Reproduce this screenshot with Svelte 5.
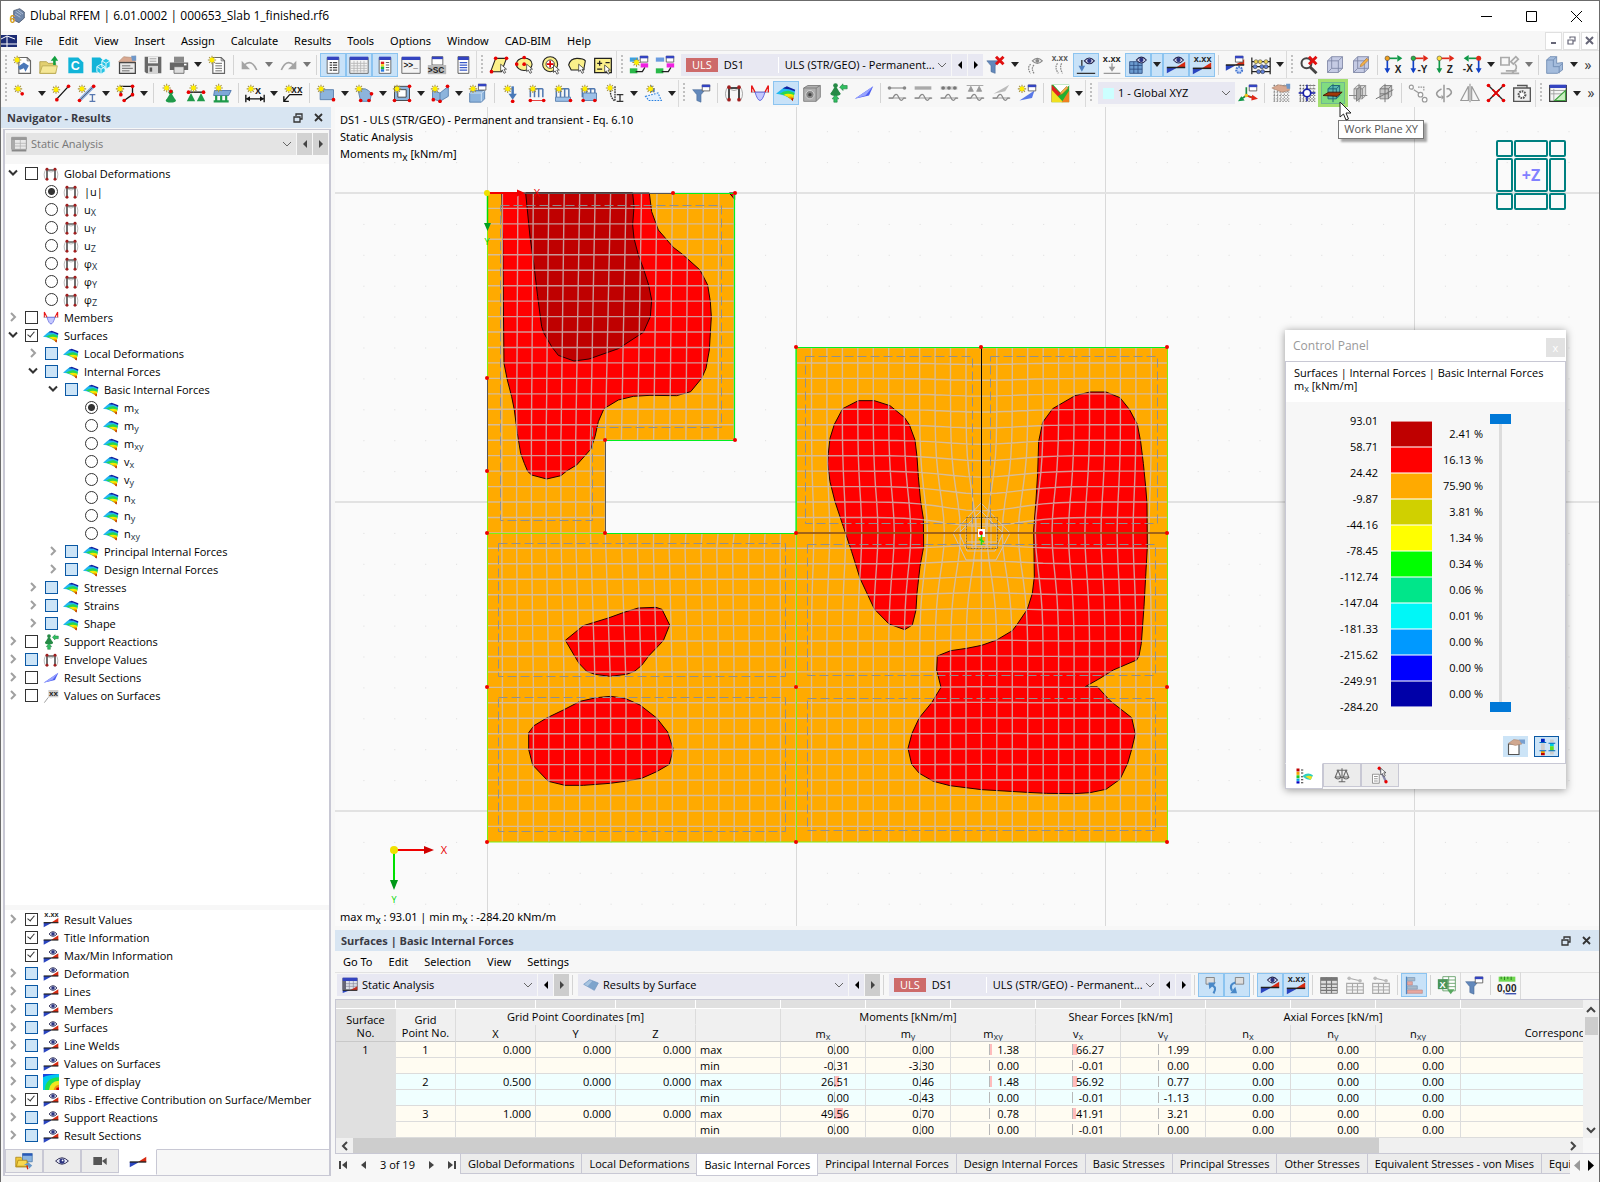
<script>
  // ---------- icon building blocks ----------
  const at = (x, y, s) => `<g transform="translate(${x} ${y})">${s}</g>`;
  const star = (x, y) => at(x, y, `<path d="M-5 0H5M0-5V5M-3.5-3.5l7 7M3.5-3.5l-7 7" stroke="#a89440" stroke-width="1.3"/><circle r="2.9" fill="#ffee00"/>`);
  const dot = (x, y, c = '#e80000') => `<circle cx="${x}" cy="${y}" r="2.2" fill="${c}"/>`;
  const win = (x, y) => at(x, y, `<path d="M.5.5h9v7h-9z" fill="#fff" stroke="#555"/><path d="M0 0h10v3H0z" fill="#3444c0"/>`);
  const eye = (x, y) => at(x, y, `<path d="M-6 0Q0-7 6 0Q0 7-6 0z" fill="#dfe2f4" stroke="#26264f" stroke-width="1.3"/><circle r="2.6" fill="#2c3480"/>`);
  const eyeGray = (x, y) => at(x, y, `<path d="M-6 0Q0-6 6 0Q0 6-6 0z" fill="#eee" stroke="#888" stroke-width="1.3"/><circle r="2.3" fill="#888"/>`);
  const cursor = (x, y) => at(x, y, `<path d="M0 0v9l2-2 2 4 2-1-2-4h3z" fill="#fff" stroke="#333" stroke-width=".9"/>`);
  const wedge = (y) => `<path d="M1 ${y}h11v1L1 ${y + 7}z" fill="#2a45c0"/><path d="M12 ${y}l11-7v7z" fill="#d82a10"/><path d="M1 ${y}h22" stroke="#222" stroke-width="1.8"/>`;
  const txt = (x, y, s, size = 8, c = '#222') => `<text x="${x}" y="${y}" font-size="${size}" font-weight="700" fill="${c}" font-family="Liberation Sans, sans-serif">${s}</text>`;
  const cone = (x, y, c = '#1f9a4a') => at(x, y, `<path d="M0-6L6 4H-6z" fill="${c}"/><ellipse cy="4" rx="6" ry="2.500" fill="${c}"/><circle cy="-6" r="2.800" fill="${c}"/>`);
  const funnel = (x, y) => at(x, y, `<path d="M0 0h15L10 6v9l-5-2V6z" fill="#6288bb" stroke="#4a6a98" stroke-width=".7"/>`);
  const doc = `<path d="M7 3h10l4 4v15H7z" fill="#fff" stroke="#666" stroke-width="1.4"/><path d="M17 3v4h4" fill="none" stroke="#666"/>`;
  const cube = `<path d="M3 7l5-5h13v14l-5 5H3z" fill="#c5cbe4" stroke="#7c84a4"/><path d="M3 7h13v14M16 7l5-5M8 2v14L3 21M8 16h13" fill="none" stroke="#7c84a4"/>`;
  const grid = (c) => `<path d="M3 3h19M3 7h19M3 11h19M3 15h19M3 19h19M3 22h19M4 2v20M8 2v20M12 2v20M16 2v20M20 2v20" stroke="${c}" stroke-dasharray="2 1.500"/>`;
  const wave = (c = '#888') => `<path d="M2 18h5q4-8 7-1t6 1h3" fill="none" stroke="${c}" stroke-width="1.500"/><path d="M2 18h20" stroke="${c}"/>`;
  const axis = (c1, c2, c3, t, flip) => flip
    ? `<path d="M20 5v15" stroke="${c2}" stroke-width="2"/><path d="M16.500 16h7L20 22z" fill="${c2}"/><path d="M20 4H8" stroke="${c1}" stroke-width="2"/><path d="M8 0v8L2 4z" fill="${c1}"/><circle cx="20" cy="4" r="3" fill="${c3}"/>` + txt(1, 20, t, 12)
    : `<path d="M4 5v15" stroke="${c2}" stroke-width="2"/><path d="M.500 16h7L4 22z" fill="${c2}"/><path d="M4 4h12" stroke="${c1}" stroke-width="2"/><path d="M16 0v8l6-4z" fill="${c1}"/><circle cx="4" cy="4" r="2.800" fill="${c3}" stroke="#333" stroke-width=".6"/>` + txt(t.length > 1 ? 9 : 13, 21, t, 12);
  const surface = `<path d="M0 13L6 8L10 5L23 9L20 21Q11 14 0 13z" fill="#20b8f0"/><path d="M8 6.500L13 4L23 8L22.500 10Q16 6.500 8 6.500z" fill="#1020a0"/><path d="M4 13.300Q10 9 16 9.500L22.300 12L20 21Q12 14 4 13.300z" fill="#28d850"/><path d="M9 14.500Q14 11.500 21.500 14.500L20 21Q15 16 9 14.500z" fill="#f8e800"/><path d="M14 17Q18 15 21 17.500L20 21z" fill="#f0a000"/><path d="M18 19l3-1-1 4z" fill="#c01000"/>`;
  const frame = `<path d="M6 20V6h12v14" fill="none" stroke="#111" stroke-width="1.800"/><path d="M5 4Q-1 12 4 21M19 4Q25 12 20 21M6 6Q12 12 18 6" fill="none" stroke="#999"/>${dot(6, 5, '#a02020')}${dot(18, 5, '#a02020')}${dot(6, 20, '#a02020')}${dot(18, 20, '#a02020')}`;
  const moment = `<path d="M1 11h22" stroke="#889"/><path d="M2 3v8M22 3v8M2 3l4 8M22 3l-4 8" fill="none" stroke="#e81818" stroke-width="1.600"/><path d="M6 11h12q-3 10-6 10t-6-10z" fill="#c4c8ff" stroke="#5058d8"/>`;
  const reactions = `<g>${cone(9, 9, '#268a46')}<path d="M14 5l4-4v2h5v4h-5v2zM7 23v-4H5l4-5 4 5h-2v4z" fill="#30c060" stroke="#1c7a3c" stroke-width=".7"/></g>`;
  const section = `<path d="M1 19L23 4l-5 11z" fill="#4c5cf0"/><path d="M1 19L23 4L14 15z" fill="#98a4ff"/>`;
  const blueRect = `<path d="M5 8h16v12H5z" fill="#8db4dc" stroke="#5078a8"/>`;
  const colorPanel = `<path d="M5 3h14v19H5z" fill="#fff" stroke="#555"/><path d="M5 2h14v4H5z" fill="#3444c0"/>`;
  const loadBars = `<path d="M4 7v10M9 7v10M14 7v10M19 7v10M4 7h15" stroke="#5078b0" stroke-width="1.800"/>`;
  const pencil = (x, y) => at(x, y, `<path d="M0 9l1-3 7-7 2 2-7 7z" fill="#f4b048" stroke="#a06820" stroke-width=".6"/>`);

  const icons = {
    newModel: doc + `<path d="M6 14l7-5 6 4-4 7-2-4-5 2z" fill="#4a78b8"/>` + star(5, 6),
    open: `<path d="M1 8h8l2 2h9v12H1z" fill="#e2cf70" stroke="#b09c48"/><path d="M1 22l3-9h18l-2 9z" fill="#f5e796" stroke="#b8a850"/><path d="M17 12V7h-3l5-6 4 6h-3v5z" fill="#12a040"/>`,
    cloud: `<path d="M4 3h12l6 6v13H4z" fill="#12b4d8"/>` + txt(7, 18, 'C', 15, '#fff'),
    cloudModel: `<path d="M1 3h10l3 3v7l-3 8H1z" fill="#12b4d8"/><path d="M13 7l5-3 5 3v7l-5 3-5-3zM7 14l5-3 5 3v6l-5 3-5-3z" fill="#28c4e4" stroke="#fff"/><path d="M13 7l5 3 5-3M18 10v7M7 14l5 3 5-3M12 17v6" stroke="#fff"/>`,
    manager: `<path d="M3 9h19v13H3z" fill="#e8e8e8" stroke="#444" stroke-width="1.500"/><path d="M6 13h10M6 16h13M6 19h9" stroke="#555"/><path d="M2 8l6-6 10 1 4-2v7H10z" fill="#d8a890" stroke="#a07860" stroke-width=".6"/><path d="M17 1h6v6h-5z" fill="#7098c8"/>`,
    save: `<path d="M2 2h20v20H4l-2-2z" fill="#686868"/><path d="M6 2h12v8H6z" fill="#eee"/><path d="M8 4.500h8M8 7.500h8" stroke="#999"/><path d="M6 13h12v9H6z" fill="#d4d4d4"/><path d="M8 15h3v5H8z" fill="#555"/>`,
    print: `<path d="M6 2h12v7H6z" fill="#8a8a8a"/><path d="M1 9h22v9H1z" fill="#666"/><path d="M6 14h12v8H6z" fill="#ddd" stroke="#666"/><path d="M18 11.500h3" stroke="#fff" stroke-width="2"/>`,
    report: doc + `<path d="M10 10h8M10 13h8M10 16h8M10 19h8" stroke="#555"/>` + star(6, 6),
    undo: `<path d="M5 12q9-8 15 6" fill="none" stroke="#a4a4a4" stroke-width="2"/><path d="M2 7v10h10z" fill="#a4a4a4"/>`,
    redo: `<path d="M19 12q-9-8-15 6" fill="none" stroke="#a4a4a4" stroke-width="2"/><path d="M22 7v10H12z" fill="#a4a4a4"/>`,
    winNav: colorPanel + `<path d="M8 9h3M8 12h3M8 15h3M8 18h3M12 9h5M12 12h5M12 15h5M12 18h5" stroke="#444" stroke-width="1.500"/>`,
    winTable: `<path d="M1 3h22v19H1z" fill="#f4f4f4" stroke="#555"/><path d="M1 2h22v4H1z" fill="#3444c0"/><path d="M2 10h20M2 13h20M2 16h20M2 19h20M6 7v14M10 7v14M14 7v14M18 7v14" stroke="#b4b4b4"/>`,
    winPanel: colorPanel + `<path d="M7 8h4v3H7z" fill="#e02020"/><path d="M7 11h4v3H7z" fill="#f0d820"/><path d="M7 14h4v3H7z" fill="#20b840"/><path d="M7 17h4v3H7z" fill="#2878e0"/><path d="M13 9h4M13 12h4M13 15h4M13 18h4" stroke="#444"/>`,
    console: `<path d="M1 3h22v19H1z" fill="#f4f4f4" stroke="#555"/><path d="M1 2h22v4H1z" fill="#3444c0"/>` + txt(3, 15, '&gt;&gt;_', 10),
    script: `<path d="M6 2h13v10H6z" fill="#fff" stroke="#555"/><path d="M6 2h13v3H6z" fill="#3444c0"/><path d="M1 12h22v11H1z" fill="#b8b8b8"/>` + txt(1, 21, '&gt;SC', 10),
    winList: `<path d="M6 2h13v20H6z" fill="#fff" stroke="#444"/><path d="M6 2h13v4H6z" fill="#3444c0"/><path d="M8 9h9M8 12h9M8 15h9M8 18h9" stroke="#3858c8" stroke-width="1.500"/>`,
    selPoly: `<path d="M8 4h13l-6 16H2z" fill="#fbf08a" stroke="#222" stroke-width="1.300"/>${dot(8, 4)}${dot(21, 4)}${dot(3, 20)}` + cursor(14, 11),
    selEllipse: `<ellipse cx="11" cy="11" rx="9.500" ry="7.500" fill="#fbf08a" stroke="#222" stroke-width="1.300"/>${dot(11, 3)}${dot(2, 11)}${dot(11, 11)}` + cursor(14, 11),
    selRing: `<circle cx="11" cy="11" r="9" fill="#fbf08a" stroke="#222" stroke-width="1.300"/><circle cx="11" cy="11" r="5" fill="#fff" stroke="#222"/><path d="M11 7v8M7 11h8" stroke="#e00000" stroke-width="2"/>` + cursor(15, 12),
    selFree: `<path d="M2 12q2-8 10-8t10 3l-2 11H5z" fill="#fbf08a" stroke="#222" stroke-width="1.300"/>` + cursor(14, 11),
    selPlus: `<path d="M2 4h20v17H2z" fill="#fbf08a" stroke="#222" stroke-width="1.500"/><path d="M5 10h6M8 7v6M5 17h6M15 9h5" stroke="#222" stroke-width="1.500"/>` + cursor(14, 12),
    loadNew: `<path d="M1 3h10v5H1z" fill="#3aa0e0"/><path d="M1 16h9v6H1z" fill="#28b848"/><path d="M14 10h9v5h-9z" fill="#f020e0"/><path d="M8 20h8l3-5" fill="none" stroke="#222" stroke-width="1.600"/>` + star(9, 9) + win(13, 1),
    loadEdit: `<path d="M1 3h10v5H1z" fill="#6a9ce0"/><path d="M1 16h9v6H1z" fill="#28b848"/><path d="M14 10h9v5h-9z" fill="#f020e0"/><path d="M8 20h8l3-5" fill="none" stroke="#222" stroke-width="1.600"/>` + win(13, 1),
    filterOff: funnel(1, 7) + `<path d="M12 2l9 9M21 2l-9 9" stroke="#e01010" stroke-width="3.500"/>`,
    beamEye: `<path d="M8 11q-5 4 0 11M12 12q-4 4 0 10" fill="none" stroke="#888" stroke-width="1.500" stroke-dasharray="2 1"/>` + eyeGray(16, 7),
    beamVals: txt(2, 7, 'x.xx', 10, '#555') + `<path d="M9 10q-4 5 1 12M14 10q-3 5 1 12" fill="none" stroke="#888" stroke-width="1.500" stroke-dasharray="2 1"/>`,
    arrowEye: `<path d="M7 6v10M1 22h22" stroke="#333" stroke-width="1.600"/><path d="M3 13h8l-4 7z" fill="#5080c0"/>` + eye(16, 7),
    arrowVals: txt(1, 8, 'x.xx', 11) + `<path d="M12 10v6M2 22h20" stroke="#999" stroke-width="1.600"/><path d="M8 14h8l-4 6z" fill="#999"/>`,
    gridEye: `<path d="M2 8h15v14H2z" fill="#6c9cd0"/><path d="M2 12.500h15M2 17h15M7 8v14M12 8v14M2 8h15v14H2z" fill="none" stroke="#2c4c80"/>` + eye(16, 6),
    diagEye: wedge(15) + eye(15, 6),
    diagVals: wedge(16) + txt(2, 8, 'x.xx', 11),
    winGear: wedge(12) + win(12, 1) + `<circle cx="17" cy="18" r="3.500" fill="#c8dcff" stroke="#4878d0" stroke-width="2.500" stroke-dasharray="2 1"/>`,
    abacus: `<path d="M1 3v20M23 3v20M1 8h22M1 14h22M1 20h22" stroke="#222" stroke-width="1.500"/><g fill="#e8d050" stroke="#555" stroke-width=".7"><circle cx="6" cy="8" r="2.400"/><circle cx="11" cy="8" r="2.400"/><circle cx="18" cy="8" r="2.400"/></g><g fill="#6080d8" stroke="#333" stroke-width=".7"><circle cx="5" cy="14" r="2.400"/><circle cx="13" cy="14" r="2.400"/><circle cx="18" cy="14" r="2.400"/><circle cx="9" cy="20" r="2.400"/><circle cx="14" cy="20" r="2.400"/></g>`,
    zoomOff: `<circle cx="9" cy="10" r="6" fill="none" stroke="#444" stroke-width="2.400"/><path d="M13 14l8 8" stroke="#444" stroke-width="3.500"/><path d="M12 2l9 9M21 2l-9 9" stroke="#e01010" stroke-width="3.400"/>`,
    cube,
    cubeEdit: cube + pencil(11, 5),
    axisX: axis('#109848', '#1040c8', '#f0a020', 'X'),
    axisY: axis('#e02818', '#1040c8', '#28b048', '-Y'),
    axisZ: axis('#e02818', '#109848', '#ffe040', 'Z'),
    axisXn: axis('#109848', '#1040c8', '#e02818', '-X', true),
    microscope: `<path d="M1 3h10v9H1zM1 22h22M7 19h13M13 8l6-6 3 3-6 6zM18 11q5 5-4 11" fill="none" stroke="#aaa" stroke-width="2"/>`,
    solidL: `<path d="M2 6l4-4h8v8l7-1v9l-6 4H2z" fill="#a4bcdc" stroke="#6c88b0"/><path d="M2 6h8v8h7v8M10 6l4-4M17 14l4-4" fill="none" stroke="#6c88b0"/>`,
    node: star(6, 7) + dot(11, 13),
    line: `<path d="M7 19L21 4" stroke="#111" stroke-width="1.600"/>${dot(7, 20)}${dot(21, 4)}` + star(6, 8),
    member: `<path d="M4 20L19 5" stroke="#88a8d8" stroke-width="4"/><path d="M4 20L19 5" stroke="#333" stroke-width=".7"/>${dot(20, 4)}${dot(3, 21)}<path d="M15 14h7M15 22h7M18.500 14v8" stroke="#5878b0" stroke-width="1.600"/>` + star(6, 7),
    polyline: `<path d="M7 14V4h14v10L11 21" fill="none" stroke="#111" stroke-width="1.600"/>${dot(7, 14)}${dot(21, 4)}${dot(21, 14)}${dot(11, 21)}` + star(6, 7),
    support: cone(13, 17) + dot(13, 10) + star(8, 6),
    support2: `<path d="M4 11h16" stroke="#111" stroke-width="1.600"/>${dot(3, 11)}${dot(21, 11)}` + `<path d="M6 12l5 10H1zM18 12l5 10H13z" fill="#1f9a4a"/>` + star(9, 6),
    supportS: `<path d="M3 9h20l-3 6H2z" fill="#7ea8d8" stroke="#4870a8"/><path d="M5 15v7M11 15v7M17 15v7M2 22h18" stroke="#1f9a4a" stroke-width="2.600"/>` + star(8, 6),
    dimX: `<path d="M1 14v9M23 14v9M2 19h20" stroke="#111" stroke-width="1.600"/><path d="M1 19l5-3v6zM23 19l-5-3v6z" fill="#111"/>` + txt(12, 13, 'x', 13) + star(7, 7),
    dimXX: `<path d="M8 14h15M8 14l-7 8M1 16v6h6" stroke="#111" stroke-width="1.600"/>` + txt(10, 12, 'xx', 12) + star(7, 7),
    surf: blueRect + dot(21, 20) + star(6, 7),
    surfRound: `<path d="M5 9q9-6 16 4l-2 9H8z" fill="#8db4dc" stroke="#5078a8"/>${dot(21, 13)}${dot(8, 21)}${dot(18, 21)}` + star(6, 7),
    opening: `<path d="M3 4h18v17H3z" fill="#8db4dc" stroke="#333"/><path d="M7 8h10v9H7z" fill="#fff" stroke="#333"/>${dot(21, 4)}${dot(3, 21)}${dot(21, 21)}` + star(6, 7),
    solid: `<path d="M3 9l9 3 10-8v12l-10 6-9-3z" fill="#8db4dc" stroke="#5078a8"/><path d="M12 12v10" stroke="#5078a8"/>${dot(21, 4)}${dot(4, 20)}${dot(12, 22)}` + star(6, 7),
    solidWin: `<path d="M2 12l4-3h14v10l-4 4H2z" fill="#8db4dc" stroke="#5078a8"/><path d="M2 12h14v10M16 12l4-3" fill="none" stroke="#d8e8f8"/>` + win(12, 1) + star(6, 7),
    loadNode: `<path d="M14 4v11" stroke="#4878b8" stroke-width="3"/><path d="M9 13h10l-5 7z" fill="#4878b8"/>${dot(14, 22)}` + star(8, 7),
    loadLine: loadBars + `<path d="M3 21h18" stroke="#e02020"/>${dot(4, 21)}${dot(20, 21)}` + star(7, 7),
    loadRect: loadBars + `<path d="M3 17h18v5H3z" fill="#9cc0e8" stroke="#5078a8"/>${dot(21, 21)}` + star(7, 7),
    loadSolid: loadBars + `<path d="M5 12h16v9H5z" fill="#9cc0e8" stroke="#5078a8"/>${dot(5, 21)}${dot(19, 21)}` + star(7, 7),
    loadFree: `<path d="M8 6q-4 9 4 16M12 4v17" fill="none" stroke="#333" stroke-width="1.600" stroke-dasharray="2 1"/><path d="M14 14h8M14 22h8M18 14v8" stroke="#333" stroke-width="1.600"/>` + star(6, 6),
    imperf: `<path d="M3 16l15-4 4 9H7z" fill="#e4f0ff" stroke="#2880e0" stroke-width="1.300" stroke-dasharray="2 1.500"/><path d="M10 3v8M13 6v5" stroke="#4878b8" stroke-width="2"/>` + star(9, 7),
    filterWin: funnel(2, 8) + win(13, 2),
    frame, moment, surface, reactions, section,
    solidRes: `<path d="M2 6l5-3h15v14l-5 5H2z" fill="#b0b0b0" stroke="#777"/><path d="M2 6h15v16M17 6l5-3" fill="none" stroke="#777"/><circle cx="9.500" cy="14" r="5" fill="#888" stroke="#ddd"/><circle cx="9.500" cy="14" r="2" fill="#444"/>`,
    wave1: `<path d="M3 6h18" stroke="#888" stroke-width="1.300"/>${dot(3, 6, '#888')}${dot(21, 6, '#888')}` + wave(),
    wave2: `<path d="M2 4h20v4H2z" fill="#aaa"/>` + wave(),
    wave3: `<path d="M2 4h20v4H2z" fill="#ccc"/>${dot(5, 6, '#777')}${dot(12, 6, '#777')}${dot(19, 6, '#777')}` + wave(),
    wave4: `<path d="M2 3h20M7 4l3 6H4zM17 4l3 6h-6z" fill="#999" stroke="#999"/>` + wave(),
    wave5: `<path d="M3 13L22 2l-5 8z" fill="#bbb"/>` + wave(),
    sectionWin: `<path d="M3 21l18-12-3 9z" fill="#5878e8"/>` + win(13, 2) + star(6, 7),
    palette: `<path d="M2 2h21v21H2z" fill="#20b030"/><path d="M2 2l11 11-11 10z" fill="#e02020"/><path d="M2 23V8l14 15z" fill="#f0e020"/><path d="M23 23V9l-9 14z" fill="#f08020"/><path d="M4 2l9 10L23 3V2z" fill="#fff"/>` + pencil(12, 5),
    axes: `<path d="M10 14V5M10 15l10 3M10 15l-7 5" stroke="#1c8a40" stroke-width="2"/><path d="M17 14l7 5-8 2z" fill="#e02818"/><path d="M0 22l4-6 4 5z" fill="#109848"/><path d="M10 15l8 3" stroke="#e02818" stroke-width="2"/>${dot(10, 15, '#f0c020')}` + win(13, 2),
    gridHand: grid('#777') + `<path d="M1 6l8-4 8 2 5-2v7l-9 2z" fill="#d8a890" stroke="#a07860" stroke-width=".6"/><path d="M18 1h5v6h-4z" fill="#7098c8"/>`,
    gridSnap: grid('#555') + `<path d="M12 2v20M2 12h20" stroke="#1820a8" stroke-width="1.800"/><circle cx="12" cy="12" r="4.500" fill="#fff" stroke="#1820a8" stroke-width="2"/>`,
    planeXY: `<path d="M6 7l4-4h10v12l-4 4H6z" fill="#58b8b0" stroke="#206878" stroke-width="1.200"/><path d="M12 1v22M6 7h10v12M16 7l4-4" stroke="#206878" stroke-width="1.200"/><path d="M0 15l7-4h16l-6 5z" fill="#a03808" stroke="#401000"/>`,
    planeYZ: `<path d="M6 7l4-4h10v12l-4 4H6z" fill="#d8d8d8" stroke="#999" stroke-width="1.200"/><path d="M12 1v22M0 15h22M6 7h10v12M16 7l4-4" stroke="#888" stroke-width="1.200"/><path d="M9 8l5-4v13l-5 5z" fill="#aaa" stroke="#777"/>`,
    planeXZ: `<path d="M6 7l4-4h10v12l-4 4H6z" fill="#c8c8c8" stroke="#888" stroke-width="1.200"/><path d="M1 19L22 8M12 1v22M6 7h10v12M16 7l4-4M6 13h10" stroke="#777" stroke-width="1.200"/>`,
    copy: `<g fill="#fff" stroke="#999" stroke-width="1.400"><circle cx="4" cy="5" r="2.400"/><circle cx="15" cy="14" r="2.800"/><circle cx="20" cy="20" r="2.800"/><path d="M7 8l6 4" fill="none"/><path d="M12 5h7v5" fill="none" stroke-dasharray="2 1"/></g>`,
    rotate: `<path d="M12 2v21M9 7q-10 5-3 10h3M15 17q10-5 3-10h-3" fill="none" stroke="#999" stroke-width="1.800"/><path d="M9 14v6l3-3z" fill="#999"/>`,
    mirror: `<path d="M10 4v17H1zM14 4v17h9zM12 1v22" fill="none" stroke="#999" stroke-width="1.400"/>`,
    intersect: `<path d="M3 3l18 18M21 3L3 21" stroke="#222" stroke-width="1.600"/>${dot(3, 3)}${dot(21, 3)}${dot(3, 21)}${dot(21, 21)}<path d="M8 8l8 8M16 8l-8 8" stroke="#e80000" stroke-width="2.200"/>`,
    camera: `<path d="M2 6h20v16H2zM6 3h12v3" fill="#eee" stroke="#555" stroke-width="1.600"/><circle cx="12" cy="14" r="4" fill="#fff" stroke="#555" stroke-width="2.600" stroke-dasharray="2 1"/>`,
    tableTri: `<path d="M2 3h20v19H2z" fill="#f4f4f4" stroke="#333" stroke-width="1.400"/><path d="M2 2h20v4H2z" fill="#3444c0"/><path d="M3 9h18M3 13h18M7 7v14" stroke="#999"/><path d="M8 21h13V9z" fill="#c8f0c0" stroke="#40a040" stroke-width="1.300"/>`,
    goBack: `<path d="M6 3h10v8H6z" fill="#ddd" stroke="#777"/><path d="M12 12q8 2 3 10" fill="none" stroke="#4888c8" stroke-width="2.600"/><path d="M9 9h9l-8 8z" fill="#4888c8"/>`,
    goDown: `<path d="M10 3h10v8H10z" fill="#ddd" stroke="#777"/><path d="M10 9q-8 2-4 10" fill="none" stroke="#4888c8" stroke-width="2.600"/><path d="M4 22h8l-2-8z" fill="#4888c8"/>`,
    tblGray: `<path d="M2 3h20v19H2z" fill="#ddd" stroke="#777"/><path d="M2 3h20v4H2z" fill="#777"/><path d="M2 11h20M2 15h20M2 18.500h20M9 3v19M15 3v19" stroke="#777" stroke-width="1.400"/>`,
    tblLight: `<path d="M2 10h20v12H2z" fill="#f4f4f4" stroke="#aaa" stroke-width="1.300"/><path d="M2 14h20M2 18h20M9 10v12M15 10v12M5 4l13 3" stroke="#aaa" stroke-width="1.300"/>${dot(5, 4, '#bbb')}${dot(18, 7, '#bbb')}`,
    bars: `<path d="M3 2v21" stroke="#4888c8" stroke-width="1.500"/><path d="M4 3h9v4H4zM4 13h12v4H4z" fill="#a8b8c8" stroke="#7898b8" stroke-width=".8"/><path d="M4 8h6v4H4zM4 18h18v4H4z" fill="#e8a8a0" stroke="#b88" stroke-width=".8"/>`,
    excel: `<path d="M7 2h15v17H7zM7 6h15M7 10h15M7 14h15M14 2v17" fill="#fff" stroke="#5a9a60"/><path d="M1 5h12v12H1z" fill="#4a9458"/>` + txt(3, 15, 'X', 11, '#fff') + `<path d="M12 17h9l-4.500 6z" fill="#58a860"/>`,
    decimals: `<path d="M2 2h20v6H2z" fill="#70d850"/><path d="M5 2v3M9 2v4M13 2v3M17 2v4" stroke="#207020"/>` + txt(0, 20, '0,00', 12) + `<path d="M10 22.500h13" stroke="#2038a8" stroke-width="1.500"/>`,
    folderNav: `<path d="M1 7h7l2 2h7v11H1z" fill="#f0c838" stroke="#a88010"/><path d="M10 2h13v11H10z" fill="#8ab4e0" stroke="#4878a8"/><path d="M10 2h13v3H10z" fill="#2858b8"/><path d="M4 11h12v8H2z" fill="#f8d850" stroke="#a88010"/><path d="M12 17l6-3 5 4-4 4-2-4z" fill="#6898c8"/><path d="M16 18l1 5" stroke="#d82010" stroke-width="1.800"/>`,
    eyeOnly: `<path d="M1 12Q12 1 23 12Q12 23 1 12z" fill="#e8eaf8" stroke="#26264f" stroke-width="1.600"/><circle cx="12" cy="12" r="4.500" fill="#2c3480"/><circle cx="13" cy="11" r="1.500" fill="#fff"/>`,
    video: `<path d="M2 6h13v12H2z" fill="#555"/><path d="M15 12l7-5v11z" fill="#555"/>`,
    wedge: wedge(12),
    valuesTag: `<path d="M8 3h15v11H8z" fill="#d0d0d0"/><path d="M8 14l-6 8" stroke="#999" stroke-width="1.400"/>` + txt(9, 12, 'xx', 12),
    display: `<path d="M0 0h24v24H0z" fill="#1848e0"/><path d="M0 24V5Q8 1 24 0v24z" fill="#00c8f0"/><path d="M3 24Q3 6 24 5v19z" fill="#20e050"/><path d="M9 24Q10 11 24 10v14z" fill="#f0e820"/><path d="M16 24Q17 17 24 16v8z" fill="#f09018"/><path d="M20 24v-3l4-1v4z" fill="#d00000"/>`,
    app: `<path d="M7 4l9-3 7 5v9l-8 7-8-4z" fill="#6f86a8" stroke="#2f3e58"/><path d="M10 5l8 5M13 3l8 6M9 9l8 5" stroke="#c8d4e8"/>` + txt(1, 23, '6', 15, '#d09a10'),
    staticCase: `<path d="M1 2h22v17H1z" fill="#dfe2ea" stroke="#555"/><path d="M1 1h22v5H1z" fill="#3444c0"/><path d="M1 6h5v13H1z" fill="#667"/><path d="M6 10h17M6 14h17M11 6v13M17 6v13" stroke="#889"/><path d="M12 20l11-6v6z" fill="#c83020"/><path d="M1 20h11L1 24z" fill="#2a45c0"/><path d="M1 20h22" stroke="#222" stroke-width="1.500"/>`,
    staticGray: `<path d="M1 2h22v18H1z" fill="#e8e8e8" stroke="#999" stroke-width="1.500"/><path d="M1 2h22v4H1z" fill="#999"/><path d="M1 6h5v14H1z" fill="#aaa"/><path d="M6 11h17M6 15h17M14 6v14" stroke="#aaa"/><path d="M1 22h22" stroke="#888" stroke-width="2.400"/>`,
    surfTile: `<path d="M1 11l9-7 13 5-6 11z" fill="#7ea4cc" stroke="#6c94c0"/><path d="M2 11l8-6 4 1-7 8z" fill="#a8c4e0"/>`,
    legend: `<path d="M2 2h4v4H2z" fill="#c00000"/><path d="M2 6.500h4v4H2z" fill="#f0a000"/><path d="M2 11h4v4H2z" fill="#20c820"/><path d="M2 15.500h4v3H2z" fill="#00a8e8"/><path d="M2 19h4v3H2z" fill="#0000c0"/><path d="M8 4h3M8 8h3M8 13h3M8 17h3M8 21h3" stroke="#333" stroke-width="1.500"/><path d="M10 12q7-6 14-1l-3 6q-5 1-11-5z" fill="#30d0c0"/><path d="M14 13q4-3 9 0l-2 4z" fill="#f0e020"/>`,
    scales: `<path d="M12 2v20M7 22h10M4 5h16M6 5L2 15h8zM18 5l-4 10h8zM1 15q5 6 10 0M13 15q5 6 10 0" fill="none" stroke="#666" stroke-width="1.600"/>`,
    pick: `<path d="M2 11h9v12H2z" fill="#fff" stroke="#777"/><path d="M4 14h5M4 17h5M4 20h5" stroke="#777"/><path d="M12 4l8 17" stroke="#88a" stroke-width="3"/>${dot(11, 3)}${dot(20, 21)}` + cursor(13, 3),
    hand: `<path d="M2 8h14v14H2z" fill="#fff" stroke="#555" stroke-width="1.500"/><path d="M2 7l7-5 8 1 3 5-9 2z" fill="#d0a890" stroke="#a07860" stroke-width=".6"/><path d="M16 2h8v6l-5-1z" fill="#78a0d0"/>`,
    sliders: `<path d="M4 1h5v5H4z" fill="#0020c0"/><path d="M4 7h5v9H4zM16 2h5v4h-5zM16 18h5v4h-5z" fill="#ccc"/><path d="M4 17h5v3H4z" fill="#f0a000"/><path d="M4 20h5v3H4z" fill="#c00000"/><path d="M16 7h5v4h-5z" fill="#00d0e0"/><path d="M16 11h5v6h-5z" fill="#60e020"/><path d="M2 6h9M2 17h9M14 7h9M14 17h9" stroke="#0068c0" stroke-width="1.500"/>`
  };
  icons.resEye = icons.diagEye;
  icons.resVals = icons.diagVals;

  // ---------- toolbars: '|' separator, 'v' drop arrow, '!' pressed ----------
  const bar1 = [
    ['newModel', 'open', 'cloud', 'cloudModel', 'manager', 'save', 'print', 'v', 'report', '|', 'undo', 'v-', 'redo', 'v-', '|', '!winNav', '!winTable', '!winPanel', 'console', 'script', 'winList'],
    ['selPoly', 'selEllipse', 'selRing', 'selFree', 'selPlus'],
    ['loadNew', 'loadEdit', 'CASE', 'filterOff', 'v', 'beamEye', 'beamVals', '!arrowEye', 'arrowVals', '!gridEye', '!v', '!diagEye', '!diagVals', '|', 'winGear', 'abacus', 'v'],
    ['zoomOff', 'cube', 'cubeEdit', '|', 'axisX', 'axisY', 'axisZ', 'axisXn', 'v', 'microscope', 'v-', '|', 'solidL', 'v', 'MORE']
  ];
  const bar2 = [
    ['node', 'v', 'line', 'member', 'v', 'polyline', 'v', '|', 'support', 'support2', 'supportS', '|', 'dimX', 'v', 'dimXX', '|', 'surf', 'v', 'surfRound', 'v', 'opening', 'v', 'solid', 'v', 'solidWin', '|', 'loadNode', 'loadLine', 'loadRect', 'loadSolid', 'loadFree', 'v', 'imperf', 'v'],
    ['filterWin', '|', 'frame', 'moment', '!surface', 'solidRes', 'reactions', 'section', '|', 'wave1', 'wave2', 'wave3', 'wave4', 'wave5', 'sectionWin', '|', 'palette', 'v'],
    ['COORD', 'axes', '|', 'gridHand', 'gridSnap', '!planeXY', 'planeYZ', 'planeXZ', '|', 'copy', 'rotate', 'mirror', 'intersect', 'camera'],
    ['tableTri', 'v', 'MORE']
  ];
  const menus = ['File', 'Edit', 'View', 'Insert', 'Assign', 'Calculate', 'Results', 'Tools', 'Options', 'Window', 'CAD-BIM', 'Help'];
  const tableMenus = ['Go To', 'Edit', 'Selection', 'View', 'Settings'];

  // ---------- navigator: [level, expander, control, icon, text, subscript] ----------
  const tree = [
    [0, 'o', 'c', 'frame', 'Global Deformations'],
    [1, '', 'R', 'frame', '|u|'], [1, '', 'r', 'frame', 'u', 'X'], [1, '', 'r', 'frame', 'u', 'Y'], [1, '', 'r', 'frame', 'u', 'Z'],
    [1, '', 'r', 'frame', 'φ', 'X'], [1, '', 'r', 'frame', 'φ', 'Y'], [1, '', 'r', 'frame', 'φ', 'Z'],
    [0, 'c', 'c', 'moment', 'Members'],
    [0, 'o', 'C', 'surface', 'Surfaces'],
    [1, 'c', 'p', 'surface', 'Local Deformations'],
    [1, 'o', 'p', 'surface', 'Internal Forces'],
    [2, 'o', 'p', 'surface', 'Basic Internal Forces'],
    [3, '', 'R', 'surface', 'm', 'x'], [3, '', 'r', 'surface', 'm', 'y'], [3, '', 'r', 'surface', 'm', 'xy'],
    [3, '', 'r', 'surface', 'v', 'x'], [3, '', 'r', 'surface', 'v', 'y'],
    [3, '', 'r', 'surface', 'n', 'x'], [3, '', 'r', 'surface', 'n', 'y'], [3, '', 'r', 'surface', 'n', 'xy'],
    [2, 'c', 'p', 'surface', 'Principal Internal Forces'],
    [2, 'c', 'p', 'surface', 'Design Internal Forces'],
    [1, 'c', 'p', 'surface', 'Stresses'], [1, 'c', 'p', 'surface', 'Strains'], [1, 'c', 'p', 'surface', 'Shape'],
    [0, 'c', 'c', 'reactions', 'Support Reactions'],
    [0, 'c', 'p', 'frame', 'Envelope Values'],
    [0, 'c', 'c', 'section', 'Result Sections'],
    [0, 'c', 'c', 'valuesTag', 'Values on Surfaces']
  ];
  const options = [
    [0, 'c', 'C', 'resVals', 'Result Values'],
    [0, '', 'C', 'resEye', 'Title Information'],
    [0, '', 'C', 'resEye', 'Max/Min Information'],
    [0, 'c', 'p', 'resEye', 'Deformation'],
    [0, 'c', 'p', 'resEye', 'Lines'],
    [0, 'c', 'p', 'resEye', 'Members'],
    [0, 'c', 'p', 'resEye', 'Surfaces'],
    [0, 'c', 'p', 'resEye', 'Line Welds'],
    [0, 'c', 'p', 'resEye', 'Values on Surfaces'],
    [0, 'c', 'p', 'display', 'Type of display'],
    [0, 'c', 'C', 'resEye', 'Ribs - Effective Contribution on Surface/Member'],
    [0, 'c', 'p', 'resEye', 'Support Reactions'],
    [0, 'c', 'p', 'resEye', 'Result Sections']
  ];

  // ---------- control panel ----------
  const levels = ['93.01', '58.71', '24.42', '-9.87', '-44.16', '-78.45', '-112.74', '-147.04', '-181.33', '-215.62', '-249.91', '-284.20'];
  const bands = [
    ['#bf0000', '2.41 %'], ['#ff0000', '16.13 %'], ['#ffaa00', '75.90 %'], ['#d0d000', '3.81 %'], ['#ffff00', '1.34 %'], ['#00ff00', '0.34 %'],
    ['#00e68a', '0.06 %'], ['#00f7f7', '0.01 %'], ['#0099ff', '0.00 %'], ['#0000ff', '0.00 %'], ['#0000a8', '0.00 %']
  ];

  // ---------- result table ----------
  const widths = [60, 60, 80, 80, 80, 85, 85, 85, 85, 85, 85, 85, 85, 85, 260];
  const axisAt = [53, 54, 38, 36, 37];
  const rows = [
    ['1', '0.000', '0.000', '0.000', 'max', ['0.00', '0.00', '1.38', '66.27', '1.99', '0.00', '0.00', '0.00'], [0, 0, 2, 4, 0]],
    ['', '', '', '', 'min', ['-0.31', '-3.30', '0.00', '-0.01', '0.00', '0.00', '0.00', '0.00'], [0, 0, 0, 0, 0]],
    ['2', '0.500', '0.000', '0.000', 'max', ['26.51', '0.46', '1.48', '56.92', '0.77', '0.00', '0.00', '0.00'], [4, 0, 2, 4, 0]],
    ['', '', '', '', 'min', ['0.00', '-0.43', '0.00', '-0.01', '-1.13', '0.00', '0.00', '0.00'], [0, 0, 0, 0, 0]],
    ['3', '1.000', '0.000', '0.000', 'max', ['49.56', '0.70', '0.78', '41.91', '3.21', '0.00', '0.00', '0.00'], [8, 0, 0, 3, 0]],
    ['', '', '', '', 'min', ['0.00', '0.00', '0.00', '-0.01', '0.00', '0.00', '0.00', '0.00'], [0, 0, 0, 0, 0]]
  ];
  const tabs = ['Global Deformations', 'Local Deformations', 'Basic Internal Forces', 'Principal Internal Forces', 'Design Internal Forces', 'Basic Stresses', 'Principal Stresses', 'Other Stresses', 'Equivalent Stresses - von Mises', 'Equivalent Stresses - Tresca'];

  // ---------- finite element mesh ----------
  const X0 = 487, Y0 = 193, H = 15.45, CX = 981.5, CY = 533;
  function shiftX(x, y) {
    if (x <= 790) {
      const t = y < 440 ? (y - 193) / 247 : y < 533 ? 1 : Math.max(0, 1 - (y - 533) / 153);
      const end = y < 533 ? 734 : 796;
      const tent = x < 611 ? (x - 487) / 124 : Math.max(0, (end - x) / (end - 611));
      return x - 5.3 * t * tent;
    }
    const d = x - CX;
    if (Math.abs(d) < 8) return x;
    const w = y > 347 ? Math.exp(-(((y - CY) / 55) ** 2)) : 0;
    return x - Math.sign(d) * 10 * w * Math.exp(-((Math.abs(d) - 40) / 90) * (Math.abs(d) > 40 ? 1 : 0)) * (x < 800 || x > 1160 ? 0 : 1);
  }
  function shiftY(x, y) {
    if (x < 796 || y < 350) return y;
    const d = y - CY;
    if (Math.abs(d) < 8) return y;
    const far = Math.max(0, Math.abs(d) - 30);
    return y - Math.sign(d) * (d < 0 ? 9 : 3) * Math.exp(-(((x - CX) / 50) ** 2)) * Math.exp(-far / 80);
  }
  let mesh = '';
  for (let i = 1; i < 44; i++) {
    const x = X0 + i * H;
    for (let j = 0; j <= 42; j++) {
      const y = Y0 + j * H;
      mesh += `${j ? 'L' : 'M'}${shiftX(x, y).toFixed(1)} ${y.toFixed(1)}`;
    }
  }
  for (let j = 1; j < 42; j++) {
    const y = Y0 + j * H;
    for (let i = 0; i <= 44; i++) {
      const x = X0 + i * H;
      mesh += `${i ? 'L' : 'M'}${x.toFixed(1)} ${shiftY(x, y).toFixed(1)}`;
    }
  }
  const slab = 'M487 193H735V440H605V533H796V347H1167V842H487z';
  const nodes = [[673, 193], [735, 193], [487, 378], [487, 471], [487, 533], [605, 440], [735, 440], [605, 533], [796, 347], [981, 347], [1167, 347], [1167, 533], [796, 533], [981, 533], [487, 687], [796, 687], [1167, 687], [487, 842], [796, 842], [1167, 842]];
  // contour outlines in thirds of a pixel from each group's origin
  const contours = [
    { x: 470, y: 170, c: '#ff0000', p: '95,69 98,200 102,580 112,630 125,680 133,720 142,790 152,850 163,880 173,904 185,915 230,927 273,917 290,903 320,885 362,838 375,800 385,755 402,716 445,690 490,679 540,676 620,677 662,665 695,625 708,595 718,540 724,440 721,395 713,345 690,300 640,255 610,232 565,180 545,125 538,69' },
    { x: 470, y: 170, c: '#bf0000', p: '167,69 180,200 190,270 203,380 215,470 222,490 245,530 265,556 312,573 357,567 445,536 520,487 541,440 545,390 536,345 520,295 505,255 492,205 488,165 492,110 488,69' },
    { x: 470, y: 170, c: '#ff0000', p: '778,69 794,69 794,88' },
    { x: 330, y: 520, c: '#ff0000', p: '706,361 760,317 835,294 885,276 925,264 978,262 996,268 1019,315 1000,362 957,407 935,436 915,453 890,463 840,469 795,463 770,454 747,430 733,407' },
    { x: 330, y: 520, c: '#ff0000', p: '596,638 612,617 650,594 700,570 750,544 800,533 842,529 885,535 930,555 980,594 1013,636 1030,688 1018,733 980,755 935,775 885,784 840,790 760,796 705,796 655,784 608,735 596,688' },
    { x: 780, y: 330, c: '#ff0000', p: '235,212 283,212 330,227 373,262 388,284 405,330 411,380 415,440 422,515 430,565 431,650 420,710 411,790 408,840 397,885 374,899 327,882 283,837 240,745 215,665 190,590 165,515 150,455 143,400 145,370 150,325 163,283 188,236' },
    { x: 780, y: 330, c: '#ff0000', p: '930,186 978,186 1020,203 1048,238 1072,283 1082,335 1090,400 1097,470 1101,520 1102,650 1097,740 1092,830 1084,940 1077,978 1070,990 1000,1020 960,1045 916,1070 952,1070 990,1112 1055,1163 1066,1212 1055,1258 1043,1300 1020,1348 978,1378 930,1388 880,1391 800,1390 740,1387 605,1379 510,1367 460,1354 418,1330 395,1303 384,1255 396,1210 418,1163 455,1118 483,1072 470,1020 472,978 512,962 560,955 605,946 650,930 697,902 710,885 742,838 757,790 763,740 761,600 768,510 773,430 776,335 788,277 818,236 885,197' }
  ];
</script>

{#snippet icon(name, size = 20)}
  <svg width={size} height={size} viewBox="0 0 24 24" fill="none" aria-hidden="true">{@html icons[name]}</svg>
{/snippet}

{#snippet chevron()}
  <svg class="chev" width="10" height="6" viewBox="0 0 10 6" aria-hidden="true"><path d="M1 1l4 4 4-4" fill="none" stroke="#666" stroke-width="1" /></svg>
{/snippet}

{#snippet step(left, off)}
  <button class="step" class:off aria-label={left ? 'Previous' : 'Next'}>
    <svg width="6" height="8" viewBox="0 0 6 8" aria-hidden="true"><path d={left ? 'M5 0v8L1 4z' : 'M1 0v8l4-4z'} fill={off ? '#444' : '#000'} /></svg>
  </button>
{/snippet}

{#snippet floatClose()}
  <span class="dockbtns">
    <button aria-label="Float"><svg width="10" height="10" viewBox="0 0 10 10"><path d="M3 3V1h6v5H7M1 4h6v5H1z" fill="none" stroke="#333" stroke-width="1.300" /></svg></button>
    <button aria-label="Close"><svg width="9" height="9" viewBox="0 0 9 9"><path d="M1 1l7 7M8 1L1 8" stroke="#333" stroke-width="1.800" /></svg></button>
  </span>
{/snippet}

{#snippet caseCombo(id)}
  <div class="combo case">
    <label class="uls" for={id}>ULS</label><span class="ds">DS1</span>
    <select {id}><option>ULS (STR/GEO) - Permanent...</option></select>
    {@render chevron()}
  </div>
  {@render step(true, false)}
  {@render step(false, false)}
{/snippet}

{#snippet toolbar(groups)}
  <div class="toolbar" role="toolbar">
    {#each groups as group}
      <div class="group">
        <i class="grip"></i>
        {#each group as item}
          {#if item === '|'}
            <i class="sep"></i>
          {:else if item === 'v' || item === 'v-' || item === '!v'}
            <button class="drop" class:on={item === '!v'} aria-label="More options"><svg width="8" height="5" viewBox="0 0 8 5"><path d="M0 0h8L4 5z" fill={item === 'v-' ? '#777' : '#222'} /></svg></button>
          {:else if item === 'CASE'}
            {@render caseCombo('case-main')}
          {:else if item === 'COORD'}
            <div class="combo coord">
              <i class="swatch"></i>
              <select aria-label="Coordinate system"><option>1 - Global XYZ</option></select>
              {@render chevron()}
            </div>
          {:else if item === 'MORE'}
            <button class="more" aria-label="Show more">»</button>
          {:else}
            {@const name = item.replace('!', '')}
            <button class="tool" class:on={item[0] === '!'} class:marked={name === 'planeXY'} aria-label={name}>{@render icon(name)}</button>
          {/if}
        {/each}
      </div>
    {/each}
  </div>
{/snippet}

{#snippet branch(list, prefix)}
  <ul class="tree">
    {#each list as [level, exp, ctl, ic, text, sub], i}
      <li style:padding-left="{level * 20}px">
        <button class="exp" disabled={!exp} aria-label="Expand {text}">
          {#if exp === 'o'}
            <svg width="10" height="8" viewBox="0 0 10 8"><path d="M1 1.500l4 4 4-4" fill="none" stroke="#333" stroke-width="2" /></svg>
          {:else if exp}
            <svg width="8" height="10" viewBox="0 0 8 10"><path d="M2 1l4 4-4 4" fill="none" stroke="#a0a0a0" stroke-width="2" /></svg>
          {/if}
        </button>
        <label>
          {#if ctl === 'r' || ctl === 'R'}
            <input type="radio" name="{prefix}{level}" checked={ctl === 'R'} />
          {:else}
            <input type="checkbox" class:part={ctl === 'p'} checked={ctl === 'C'} />
          {/if}
          {@render icon(ic, 16)}
          <span>{text}{#if sub}<sub>{sub}</sub>{/if}</span>
        </label>
      </li>
    {/each}
  </ul>
{/snippet}

{#snippet tableTool(name, on)}
  <button class="tool" class:on aria-label={name}>{@render icon(name)}</button>
{/snippet}

<div class="window">
  <header class="title">
    {@render icon('app', 16)}
    <h1>Dlubal RFEM | 6.01.0002 | 000653_Slab 1_finished.rf6</h1>
    <div class="wincontrols">
      <button aria-label="Minimize"><svg width="11" height="11" viewBox="0 0 11 11"><path d="M0 5.500h11" stroke="#000" /></svg></button>
      <button aria-label="Maximize"><svg width="11" height="11" viewBox="0 0 11 11"><path d="M.5.5h10v10H.5z" fill="none" stroke="#000" /></svg></button>
      <button aria-label="Close"><svg width="11" height="11" viewBox="0 0 11 11"><path d="M0 0l11 11M11 0L0 11" stroke="#000" /></svg></button>
    </div>
  </header>

  <nav class="menubar">
    <svg class="logo" width="16" height="12" viewBox="0 0 16 12" aria-hidden="true"><path d="M0 0h16v12H0z" fill="#1c2c74" /><path d="M0 4l6-3 8 3M6 1v11M0 9h16" fill="none" stroke="#fff" /></svg>
    {#each menus as m}<button>{m}</button>{/each}
    <div class="mdi">
      <button aria-label="Minimize document"><svg width="9" height="9" viewBox="0 0 9 9"><path d="M2 7h5" stroke="#667" stroke-width="2" /></svg></button>
      <button aria-label="Restore document"><svg width="9" height="9" viewBox="0 0 9 9"><path d="M3 2.500V1h5v4H6M1 4h5v4H1z" fill="none" stroke="#667" stroke-width="1.200" /></svg></button>
      <button aria-label="Close document"><svg width="9" height="9" viewBox="0 0 9 9"><path d="M1 1l7 7M8 1L1 8" stroke="#667" stroke-width="2" /></svg></button>
    </div>
  </nav>

  {@render toolbar(bar1)}
  <div class="second">
    {@render toolbar(bar2)}
    <div class="tooltip" role="tooltip">Work Plane XY</div>
    <svg class="pointer" width="14" height="20" viewBox="0 0 14 20" aria-hidden="true"><path d="M1 1v15l3.500-3 2.500 6 2.500-1-2.500-6h5z" fill="#fff" stroke="#222" /></svg>
  </div>

  <div class="body">
    <aside class="navigator">
      <div class="docktitle"><h2>Navigator - Results</h2>{@render floatClose()}</div>
      <div class="navframe">
        <div class="navcase">
          <div class="combo disabled">
            {@render icon('staticGray', 16)}
            <select aria-label="Analysis type" disabled><option>Static Analysis</option></select>
            {@render chevron()}
          </div>
          {@render step(true, true)}
          {@render step(false, true)}
        </div>
        <div class="pane grow">{@render branch(tree, 'res')}</div>
        <div class="pane lower">{@render branch(options, 'opt')}</div>
        <div class="navtabs">
          <button aria-label="Data">{@render icon('folderNav', 18)}</button>
          <button aria-label="Display">{@render icon('eyeOnly', 14)}</button>
          <button aria-label="Views">{@render icon('video', 16)}</button>
          <button class="active" aria-label="Results">{@render icon('wedge', 18)}</button>
          <i></i>
        </div>
      </div>
    </aside>

    <main>
      <section class="view" aria-label="Model view">
        <svg class="canvas" width="100%" height="100%" aria-hidden="true">
          <defs>
            <pattern id="dots" width="30.9" height="30.9" patternUnits="userSpaceOnUse" x="487" y="193"><path d="M0 0h1v1H0z" fill="#dcdcdc" /></pattern>
            <clipPath id="slabclip"><path d={slab} /></clipPath>
          </defs>
          <g transform="translate(-335 -107)">
            <path d="M335 125h4000v2000H335z" fill="url(#dots)" />
            <path d="M487.500 107V4000M796.500 107V4000M1105.500 107V4000M1414.500 107V4000" stroke="#d9d9d9" />
            <path d="M335 193H4000M335 502H4000M335 811H4000" stroke="#e2e2e2" stroke-width="2" />
            <path d={slab} fill="#ffaa00" />
            {#each contours as s}
              <polygon transform="translate({s.x} {s.y}) scale(.33333)" points={s.p} fill={s.c} stroke="#200" stroke-width="3" />
            {/each}
            <g clip-path="url(#slabclip)">
              <path d={mesh} fill="none" stroke="#ccc2c0" stroke-width="1.400" opacity=".78" />
              <path d="M981 503l29 30-14 27h-30l-13-27zM981 511l22 22-8 18h-28l-8-18zM972 518h19v30h-19zM966 524h31v18h-31zM976 518v30M986 518v30" fill="none" stroke="#ccc2c0" />
              <path d="M966.500 517.500h31v31h-31z" fill="none" stroke="#8a6a30" stroke-dasharray="2 1" />
            </g>
            <g fill="none" stroke="#8f8f8f" stroke-dasharray="9 4">
              <path d="M500.500 205.500H721.500V427.500H592.500V520.500H500.500z" />
              <path d="M498.500 543.500h287v133h-287zM498.500 697.500h287v134h-287z" />
              <path d="M805.500 356.500h167v167h-167zM990.500 356.500h167v167h-167z" />
              <path d="M807.500 544.500h348v131h-348zM807.500 698.500h348v132h-348z" />
            </g>
            <path d="M487.500 378V193M487.500 471V842H1167.500V347.500H796.500V842M487 533.500H796" fill="none" stroke="#7cf010" />
            <path d="M673 193.500H734.500V440.500H605M605 533.500H796V347.500H1167" fill="none" stroke="#00f020" stroke-width="1.200" />
            <path d="M487.500 378V471M487 193.500H673M605.500 440V533" fill="none" stroke="#555" />
            <path d="M796 533H1167" stroke="#8a4800" stroke-width="1.500" />
            <path d="M981.500 347V533" stroke="#000" />
            <path d="M978 529h7v8h-7z" fill="#fff" />
            <path d="M981.500 533v12M979 539l5 3" stroke="#20e010" stroke-width="1.500" />
            {#each nodes as [x, y]}<circle cx={x} cy={y} r="2" fill="#f00000" />{/each}
            <path d="M487 193h32" stroke="#f00000" stroke-width="2" /><path d="M517 189.500v7l8-3.500z" fill="#f00000" />
            <path d="M487.500 193v32" stroke="#00e000" stroke-width="1.500" /><path d="M484 223h7l-3.500 8z" fill="#00a020" />
            <circle cx="487" cy="193" r="3" fill="#f0e000" />
            <path d="M394 850h34" stroke="#f00000" stroke-width="2" /><path d="M424 846v8l10-4z" fill="#d00000" />
            <path d="M394 850v34" stroke="#00e000" stroke-width="2" /><path d="M390 880h8l-4 10z" fill="#009818" />
            <circle cx="394" cy="850" r="4" fill="#f0e000" />
            <g font-size="11" text-anchor="middle" fill="#e80000"><text x="537" y="197">X</text><text x="444" y="854">X</text></g>
            <g font-size="9" text-anchor="middle" fill="#00d800"><text x="487" y="245">Y</text><text x="394" y="903">Y</text></g>
          </g>
        </svg>
        <div class="info top">DS1 - ULS (STR/GEO) - Permanent and transient - Eq. 6.10<br />Static Analysis<br />Moments m<sub>x</sub> [kNm/m]</div>
        <div class="info bottom">max m<sub>x</sub> : 93.01 | min m<sub>x</sub> : -284.20 kNm/m</div>
        <button class="viewcube" aria-label="View direction">
          {#each Array(9) as _, i}<span>{i === 4 ? '+Z' : ''}</span>{/each}
        </button>

        <section class="cpanel" aria-label="Control Panel">
          <header><h2>Control Panel</h2><button aria-label="Close panel">x</button></header>
          <div class="cphead">Surfaces | Internal Forces | Basic Internal Forces<br />m<sub>x</sub> [kNm/m]</div>
          <div class="scale">
            <div class="levels">{#each levels as l}<span>{l}</span>{/each}</div>
            <div class="bands">{#each bands as [c]}<i style:background={c}></i>{/each}</div>
            <div class="shares">{#each bands as [, p]}<span>{p}</span>{/each}</div>
            <div class="range">
              <input type="range" min="0" max="100" value="100" aria-label="Upper limit" />
              <input type="range" min="0" max="100" value="0" aria-label="Lower limit" />
            </div>
          </div>
          <div class="cpbtns">
            <button aria-label="Edit scale">{@render icon('hand', 18)}</button>
            <button class="ring" aria-label="Scale options">{@render icon('sliders', 18)}</button>
          </div>
          <div class="cptabs">
            <button class="active" aria-label="Color scale">{@render icon('legend', 18)}</button>
            <button aria-label="Factors">{@render icon('scales', 16)}</button>
            <button aria-label="Filter">{@render icon('pick', 18)}</button>
            <i></i>
          </div>
        </section>
      </section>

      <section class="dock">
        <div class="docktitle"><h2>Surfaces | Basic Internal Forces</h2>{@render floatClose()}</div>
        <nav class="menubar small">{#each tableMenus as m}<button>{m}</button>{/each}</nav>
        <div class="toolbar tabletools">
          <div class="combo kind">
            {@render icon('staticCase', 16)}
            <select aria-label="Analysis"><option>Static Analysis</option></select>
            {@render chevron()}
          </div>
          {@render step(true, false)}{@render step(false, true)}
          <i class="sep"></i>
          <div class="combo by">
            {@render icon('surfTile', 16)}
            <select aria-label="Result type"><option>Results by Surface</option></select>
            {@render chevron()}
          </div>
          {@render step(true, false)}{@render step(false, true)}
          <i class="sep"></i>
          {@render caseCombo('case-table')}
          <i class="sep"></i>
          {@render tableTool('goBack', true)}{@render tableTool('goDown', true)}
          <i class="sep"></i>
          {@render tableTool('resEye', true)}{@render tableTool('resVals', true)}
          <i class="sep"></i>
          {@render tableTool('tblGray', false)}{@render tableTool('tblLight', false)}{@render tableTool('tblLight', false)}
          <i class="sep"></i>
          {@render tableTool('bars', true)}
          <i class="sep"></i>
          {@render tableTool('excel', false)}
          <i class="rule"></i>
          {@render tableTool('filterWin', false)}
          <i class="sep"></i>
          {@render tableTool('decimals', false)}
          <i class="rule"></i>
        </div>

        <div class="tablearea">
          <div class="scroller">
            <table>
              <colgroup>{#each widths as w}<col style:width="{w}px" />{/each}</colgroup>
              <thead>
                <tr class="strip">{#each widths as _}<td></td>{/each}</tr>
                <tr>
                  <th rowspan="2" class="side low">Surface<br />No.</th>
                  <th rowspan="2" class="low">Grid<br />Point No.</th>
                  <th colspan="3" class="grp">Grid Point Coordinates [m]</th>
                  <th rowspan="2"></th>
                  <th colspan="3" class="grp">Moments [kNm/m]</th>
                  <th colspan="2" class="grp">Shear Forces [kN/m]</th>
                  <th colspan="3" class="grp">Axial Forces [kN/m]</th>
                  <th rowspan="2" class="low">Corresponding Load Case</th>
                </tr>
                <tr class="comp">
                  <th>X</th><th>Y</th><th>Z</th>
                  <th>m<sub>x</sub></th><th>m<sub>y</sub></th><th>m<sub>xy</sub></th>
                  <th>v<sub>x</sub></th><th>v<sub>y</sub></th>
                  <th>n<sub>x</sub></th><th>n<sub>y</sub></th><th>n<sub>xy</sub></th>
                </tr>
              </thead>
              <tbody>
                {#each rows as [gp, x, y, z, kind, vals, bars], r}
                  <tr class:alt={r === 2 || r === 3}>
                    {#if r === 0}<th rowspan="6" class="side first">1</th>{/if}
                    <td class="mid">{gp}</td>
                    <td class="num">{x}</td><td class="num">{y}</td><td class="num">{z}</td>
                    <td class="extreme">{kind}</td>
                    {#each vals as v, c}
                      <td class="val">
                        {#if c < 5}<i class="bar" style:left="{axisAt[c]}px" style:width="{bars[c]}px"></i>{/if}
                        <span>{v}</span>
                      </td>
                    {/each}
                    <td></td>
                  </tr>
                {/each}
              </tbody>
            </table>
          </div>
          <div class="vscroll">
            <svg width="10" height="7" viewBox="0 0 10 7"><path d="M1 6l4-4 4 4" fill="none" stroke="#444" stroke-width="2" /></svg>
            <i></i>
            <svg width="10" height="7" viewBox="0 0 10 7"><path d="M1 1l4 4 4-4" fill="none" stroke="#444" stroke-width="2" /></svg>
          </div>
          <div class="hscroll">
            <svg width="7" height="10" viewBox="0 0 7 10"><path d="M6 1L2 5l4 4" fill="none" stroke="#444" stroke-width="2" /></svg>
            <i></i>
            <svg width="7" height="10" viewBox="0 0 7 10"><path d="M1 1l4 4-4 4" fill="none" stroke="#444" stroke-width="2" /></svg>
          </div>
        </div>

        <div class="sheets">
          <div class="pager">
            <button aria-label="First"><svg width="9" height="8" viewBox="0 0 9 8"><path d="M0 0h2v8H0zM8 0v8L3 4z" fill="#444" /></svg></button>
            <button aria-label="Previous"><svg width="6" height="8" viewBox="0 0 6 8"><path d="M5 0v8L0 4z" fill="#444" /></svg></button>
            <span>3 of 19</span>
            <button aria-label="Next"><svg width="6" height="8" viewBox="0 0 6 8"><path d="M1 0v8l5-4z" fill="#444" /></svg></button>
            <button aria-label="Last"><svg width="9" height="8" viewBox="0 0 9 8"><path d="M7 0h2v8H7zM1 0v8l5-4z" fill="#444" /></svg></button>
          </div>
          <div class="tablist" role="tablist">
            {#each tabs as t, i}<button role="tab" aria-selected={i === 2} class:active={i === 2}>{t}</button>{/each}
          </div>
          <div class="more-tabs">
            <button aria-label="Scroll tabs left"><svg width="6" height="11" viewBox="0 0 6 11"><path d="M6 0v11L0 5.500z" fill="#999" /></svg></button>
            <button aria-label="Scroll tabs right"><svg width="6" height="11" viewBox="0 0 6 11"><path d="M0 0v11l6-5.500z" fill="#000" /></svg></button>
          </div>
        </div>
      </section>
    </main>
  </div>
</div>

<style>
  :global(body) { margin: 0; background: #f7f7f7; }
  .window {
    min-height: 100vh; box-sizing: border-box; display: flex; flex-direction: column; overflow: hidden;
    border: 1px solid #6b6b6b; border-bottom: 0; background: #f7f7f7; padding-bottom: 6px;
    font-family: "Open Sans", "Noto Sans", sans-serif; font-size: 11px; line-height: 16px; color: #000;
  }
  button, select, input { font: inherit; color: inherit; margin: 0; padding: 0; border: 0; background: none; border-radius: 0; }
  button { display: flex; align-items: center; justify-content: center; flex: none; white-space: nowrap; }
  svg { display: block; flex: none; }
  h1, h2 { margin: 0; font: inherit; }
  sub { font-size: 9px; line-height: 0; vertical-align: -2px; color: #234; }

  .title { height: 30px; display: flex; align-items: center; padding-left: 8px; gap: 5px; background: #fff; font-size: 12px; }
  .wincontrols { margin-left: auto; display: flex; }
  .wincontrols button { width: 45px; height: 30px; }

  .menubar { height: 20px; box-sizing: border-box; display: flex; align-items: center; border-bottom: 1px solid #e2e2e2; font-family: "Noto Sans", "Open Sans", sans-serif; }
  .menubar button { padding: 0 8px; }
  .menubar.small { border-bottom: 0; height: 21px; }
  .mdi { margin-left: auto; display: flex; gap: 1px; padding-right: 1px; }
  .mdi button { width: 17px; height: 18px; box-sizing: border-box; padding: 0; background: #fff; border: 1px solid #e0e0e0; }

  .toolbar { height: 28px; display: flex; align-items: center; box-sizing: border-box; border-bottom: 1px solid #e2e2e2; }
  .second { position: relative; }
  .second .toolbar { border-bottom: 0; }
  .group { display: flex; align-items: center; height: 27px; }
  .group + .group { border-left: 1px solid #dadada; }
  .grip { width: 2px; height: 20px; margin: 0 3px 0 4px; flex: none; background: repeating-linear-gradient(#c0c0c0 0 2px, transparent 2px 4px); }
  .tool { width: 26px; height: 24px; box-sizing: border-box; border: 1px solid transparent; }
  .drop { width: 12px; height: 24px; box-sizing: border-box; }
  .on { background: #c8e2f8; border: 1px solid #8cc4f0; }
  .marked { background: #80dc80; border: 2px solid #70b890; outline: 3px solid #a4e070; outline-offset: -1px; }
  .sep { width: 1px; height: 20px; margin: 0 3px; background: #d4d4d4; flex: none; }
  .rule { width: 1px; height: 27px; background: #dadada; flex: none; }
  .more { width: 16px; font-size: 14px; color: #333; }

  .combo { display: flex; align-items: center; height: 22px; background: #e8e8f2; box-sizing: border-box; padding: 0 4px 0 5px; margin-left: 3px; flex: none; }
  .combo select { appearance: none; flex: 1; min-width: 0; padding-left: 4px; outline: 0; opacity: 1; }
  .case { width: 270px; }
  .uls { background: #cd6a6a; color: #fff; padding: 0 6px; line-height: 14px; }
  .ds { width: 54px; padding-left: 6px; border-right: 1px solid #fff; }
  .case select { padding-left: 6px; }
  .coord { width: 137px; }
  .swatch { width: 11px; height: 11px; background: #ccffff; flex: none; }
  .step { width: 15px; height: 22px; margin-left: 1px; background: #e8e8f2; }
  .step.off { background: #cdcdcd; }

  .tooltip { position: absolute; top: 41px; right: 175px; height: 17px; padding: 0 5px; line-height: 16px; background: #fff; color: #555; border: 1px solid #777; box-shadow: 3px 3px 2px #0005; z-index: 3; }
  .pointer { position: absolute; top: 22px; right: 246px; z-index: 4; }

  .body { flex: 1; display: grid; grid-template-columns: 330px minmax(0, 1fr); gap: 4px; }
  .docktitle { height: 21px; display: flex; align-items: center; padding: 0 2px 0 6px; background: #d8e5f2; color: #3a3a44; }
  .docktitle h2 { font-weight: 700; }
  .dockbtns { margin-left: auto; display: flex; }
  .dockbtns button { width: 21px; height: 20px; }
  .navigator { display: flex; flex-direction: column; }
  .navframe { flex: 1; display: flex; flex-direction: column; margin: 1px 0 0 2px; border: 1px solid #c8c8d4; border-width: 1px 2px; }
  .navcase { height: 34px; display: flex; align-items: flex-start; padding: 3px 1px 0; box-sizing: border-box; }
  .combo.disabled { flex: 1; margin-left: 0; background: #e4e4e4; color: #777; }
  .navcase .step { background: #d2d2d2; }
  .pane { background: #fff; }
  .grow { flex: 1; }
  .lower { margin-top: 5px; padding-bottom: 4px; }
  .tree { list-style: none; margin: 0; padding: 1px 0 0; }
  .tree li { height: 18px; display: flex; align-items: center; }
  .exp { width: 16px; height: 16px; margin: 0 4px 2px 0; }
  .tree label { display: flex; align-items: center; gap: 5px; white-space: nowrap; }
  .tree input { appearance: none; width: 13px; height: 13px; margin-bottom: 2px; border: 1px solid #333; background: #fff; }
  .tree input[type="radio"] { border-radius: 50%; }
  .tree input[type="radio"]:checked { background: radial-gradient(#333 0 3px, #fff 4px); }
  .tree input[type="checkbox"]:checked { position: relative; }
  .tree input[type="checkbox"]:checked::after { content: ""; position: absolute; left: 3px; top: 0; width: 3px; height: 6px; border: solid #333; border-width: 0 1px 1px 0; transform: rotate(40deg); }
  .tree input.part { background: #cce4f7; border-color: #0a58a4; }
  .navtabs { display: flex; height: 26px; }
  .navtabs button { width: 38px; height: 24px; box-sizing: border-box; background: #ececec; border: 1px solid #c8c8d4; }
  .navtabs .active { height: 26px; background: #fff; border-color: #fff #c8c8d4 transparent transparent; }
  .navtabs i { flex: 1; border-top: 1px solid #c8c8d4; }

  main { display: flex; flex-direction: column; gap: 4px; min-width: 0; }
  .view { flex: 1; position: relative; background: #fafafa; overflow: hidden; }
  .canvas { position: absolute; inset: 0; }
  .info { position: absolute; left: 5px; line-height: 17px; white-space: nowrap; font-family: "Noto Sans", "Open Sans", sans-serif; }
  .info sub { color: inherit; font-size: 10px; vertical-align: -3px; }
  .info.top { top: 4px; }
  .info.bottom { bottom: 1px; }
  .viewcube { position: absolute; top: 33px; right: 33px; display: grid; grid-template: 17px 34px 17px / 17px 34px 17px; gap: 1px; align-items: stretch; }
  .viewcube span { border: 2px solid #008080; border-radius: 2px; font-size: 16px; line-height: 20px; font-weight: 700; color: #8080ff; display: flex; align-items: center; justify-content: center; }

  .cpanel { position: absolute; right: 33px; top: 223px; width: 281px; background: #fff; box-shadow: 0 1px 8px #0006; }
  .cpanel header { display: flex; align-items: center; height: 31px; padding: 0 1px 0 8px; color: #999; }
  .cpanel header h2 { font-size: 12px; }
  .cpanel header button { margin: 4px 0 0 auto; width: 19px; height: 19px; background: #e2e2e2; color: #fff; }
  .cphead { border: 1px solid #c8c8d4; border-bottom: 0; padding: 4px 8px 10px; line-height: 13px; }
  .scale { display: flex; align-items: flex-start; background: #f7f7f7; padding: 6px 0 10px; border: solid #c8c8d4; border-width: 0 1px; }
  .levels, .shares, .bands { display: flex; flex-direction: column; }
  .levels { width: 92px; text-align: right; }
  .levels span, .shares span { line-height: 26px; }
  .bands { width: 41px; margin: 13px 0 0 13px; }
  .bands i { height: 24px; border: 1px solid #fff8; border-width: 1px 0; }
  .shares { width: 51px; text-align: right; margin-top: 13px; }
  .range { position: relative; width: 21px; height: 298px; margin: 6px 0 0 7px; background: linear-gradient(#dcdcdc, #dcdcdc) center / 3px 100% no-repeat; }
  .range input { appearance: none; position: absolute; inset: 0; width: 21px; height: 298px; writing-mode: vertical-lr; direction: rtl; pointer-events: none; }
  .range input::-webkit-slider-thumb { appearance: none; width: 21px; height: 10px; background: #0078d7; pointer-events: auto; }
  .cpbtns { display: flex; justify-content: flex-end; gap: 6px; padding: 6px 6px; border: solid #c8c8d4; border-width: 0 1px; }
  .cpbtns button { width: 25px; height: 21px; box-sizing: border-box; background: #cce4f7; }
  .cpbtns .ring { border: 1px solid #0a58a4; }
  .cptabs { display: flex; height: 26px; background: #f7f7f7; }
  .cptabs button { width: 38px; height: 24px; box-sizing: border-box; background: #ececec; border: 1px solid #c8c8d4; }
  .cptabs .active { height: 26px; background: #fff; border-color: #fff #c8c8d4 #c8c8d4 #c8c8d4; }
  .cptabs i { flex: 1; border-top: 1px solid #c8c8d4; }

  .tabletools { height: 27px; border: 0; border-top: 1px solid #e2e2e2; padding-bottom: 2px; }
  .tabletools .combo { margin-left: 2px; }
  .kind { width: 200px; }
  .by { width: 270px; }
  .tablearea { display: grid; grid-template-columns: minmax(0, 1fr) 16px; border: 1px solid #c8c8d4; border-width: 1px 0 0 1px; }
  .scroller { overflow: hidden; }
  table { table-layout: fixed; width: 1385px; border-spacing: 0; border-collapse: separate; line-height: 15px; }
  th, td { padding: 0; font-weight: 400; border: solid #dcdcdc; border-width: 0 1px 1px 0; height: 15px; overflow: hidden; white-space: nowrap; }
  .strip td { height: 8px; background: #e0e0e0; border-color: #fff; }
  thead th { background: #f0f0f0; border-bottom-color: #c8c8c8; }
  .comp th { height: 16px; }
  .grp { border-bottom-color: #f0f0f0; }
  thead .low { line-height: 13px; vertical-align: bottom; padding-bottom: 2px; }
  .side, thead .side { background: #e0e0e0; border-color: #e0e0e0; }
  thead .side { border-bottom-color: #c8c8c8; }
  .first { vertical-align: top; }
  tbody td { background: #fffcf2; }
  .alt td { background: #f0ffff; }
  .mid { text-align: center; }
  .num { text-align: right; padding-right: 4px; }
  .extreme { padding-left: 4px; }
  .val { position: relative; text-align: right; padding-right: 16px; }
  .val span { position: relative; }
  .bar { position: absolute; top: 2px; height: 11px; background: #ffbcbc; border-left: 1px solid #b8b8b8; }
  .vscroll, .hscroll { display: flex; align-items: center; background: #f0f0f0; }
  .vscroll { flex-direction: column; padding: 6px 0 4px; gap: 4px; }
  .vscroll i { width: 13px; height: 18px; background: #cdcdcd; }
  .vscroll svg:last-child { margin-top: auto; }
  .hscroll { height: 15px; padding: 0 6px 0 5px; gap: 5px; }
  .hscroll i { flex: 0 1 83%; height: 15px; background: #cdcdcd; }
  .hscroll svg:last-child { margin-left: auto; }

  .sheets { display: flex; height: 22px; border-top: 1px solid #c8c8d4; }
  .pager { width: 125px; display: flex; align-items: center; justify-content: space-between; padding: 0 4px; box-sizing: border-box; flex: none; }
  .tablist { flex: 1; display: flex; overflow: hidden; min-width: 0; }
  .tablist button { padding: 0 7px; height: 20px; background: #ececec; border: solid #c8c8d4; border-width: 0 1px 1px 1px; }
  .tablist button + button { margin-left: -1px; }
  .tablist .active { background: #fff; height: 22px; }
  .more-tabs { display: flex; gap: 8px; padding: 0 5px 0 4px; }
</style>
